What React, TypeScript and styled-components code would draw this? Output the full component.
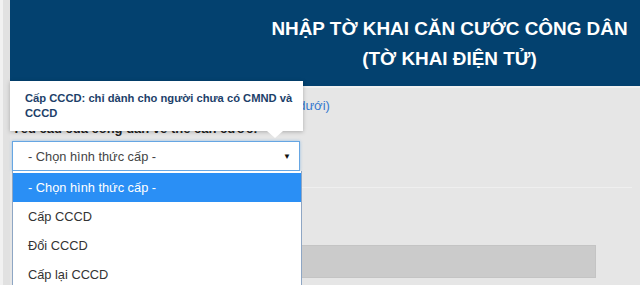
import styled, { createGlobalStyle } from "styled-components";

const GlobalStyle = createGlobalStyle`
  html, body {
    margin: 0;
    padding: 0;
    background: #e6e6e6;
    font-family: "Liberation Sans", Arial, sans-serif;
    overflow: hidden;
  }
`;

const OPTIONS = ["- Chọn hình thức cấp -", "Cấp CCCD", "Đổi CCCD", "Cấp lại CCCD"];

const App = () => {
  return (
    <>
      <GlobalStyle />
      <Page>
        <LeftRail />
        <Main>
          <Header>
            <HeaderTitle>
              NHẬP TỜ KHAI CĂN CƯỚC CÔNG DÂN
              <br />
              (TỜ KHAI ĐIỆN TỬ)
            </HeaderTitle>
          </Header>
          <Content>
            <Intro>
              Vui lòng khai đầy đủ thông tin <LinkText>(xem hướng dẫn ở dưới)</LinkText>
            </Intro>
            <FieldLabel>Yêu cầu của công dân về thẻ căn cước:</FieldLabel>
            <SelectWrap>
              <SelectBox>
                <span>{OPTIONS[0]}</span>
                <Caret>▼</Caret>
              </SelectBox>
              <DropList>
                {OPTIONS.map((opt, i) => (
                  <OptionRow key={opt} $active={i === 0}>
                    {opt}
                  </OptionRow>
                ))}
              </DropList>
              <Tooltip>
                Cấp CCCD: chỉ dành cho người chưa có CMND và CCCD
              </Tooltip>
            </SelectWrap>
            <Divider />
            <FieldLabel>Họ, chữ đệm và tên khai sinh:</FieldLabel>
            <DisabledInput />
          </Content>
        </Main>
      </Page>
    </>
  );
};

export default App;

const Page = styled.div`
  display: flex;
  width: 640px;
  height: 285px;
  overflow: hidden;
`;

const LeftRail = styled.div`
  width: 3px;
  flex-shrink: 0;
  background: #f1f1f1;
  border-right: 7px solid #e1e1e1;
`;

const Main = styled.div`
  flex: 1;
  display: flex;
  flex-direction: column;
`;

const Header = styled.div`
  height: 86px;
  background: #03416f;
  display: flex;
  align-items: center;
  padding-left: 249px;
  border-bottom: 2px solid #f0f0f0;
`;

const HeaderTitle = styled.h1`
  margin: 0;
  flex: 1;
  text-align: center;
  color: #ffffff;
  font-size: 18.9px;
  font-weight: bold;
  line-height: 30px;
  padding-top: 2px;
`;

const Content = styled.div`
  padding: 8px 0 0 2px;
  display: flex;
  flex-direction: column;
`;

const Intro = styled.div`
  height: 20px;
  font-size: 13px;
  line-height: 20px;
  color: #333;
`;

const LinkText = styled.span`
  color: #3579d0;
`;

const FieldLabel = styled.div`
  font-size: 13px;
  font-weight: bold;
  color: #222;
  line-height: 18px;
  margin-top: 4px;
  margin-bottom: 3px;
`;

const SelectWrap = styled.div`
  position: relative;
  width: 288px;
`;

const SelectBox = styled.div`
  height: 28px;
  box-sizing: content-box;
  border: 1px solid #66a6e3;
  background: #fff;
  display: flex;
  align-items: center;
  justify-content: space-between;
  padding: 0 8px 0 15px;
  font-size: 12.8px;
  color: #444;
  box-shadow: 0 0 3px rgba(102, 166, 227, 0.6);
`;

const Caret = styled.span`
  font-size: 8px;
  color: #111;
`;

const DropList = styled.div`
  position: absolute;
  top: 30px;
  left: 0;
  width: 288px;
  background: #fff;
  border: 1px solid #8ea6c4;
  border-top: none;
  z-index: 5;
  padding-top: 2px;
`;

const OptionRow = styled.div<{ $active: boolean }>`
  height: 29px;
  line-height: 29px;
  padding-left: 15px;
  font-size: 12.8px;
  color: ${(p) => (p.$active ? "#fff" : "#333")};
  background: ${(p) => (p.$active ? "#2a8ff5" : "#fff")};
`;

const Tooltip = styled.div`
  position: absolute;
  left: -2px;
  bottom: 40px;
  width: 274px;
  padding: 10px 4px 10px 15px;
  background: #fff;
  color: #1d3f6a;
  font-size: 11.2px;
  font-weight: bold;
  line-height: 15px;
  box-shadow: 0 1px 4px rgba(0, 0, 0, 0.25);
  z-index: 6;

  &::after {
    content: "";
    position: absolute;
    right: 20px;
    bottom: -7px;
    border-left: 8px solid transparent;
    border-right: 8px solid transparent;
    border-top: 7px solid #fff;
  }
`;

const Divider = styled.div`
  height: 1px;
  background: #efefef;
  margin: 16px 0 0 0;
  width: 620px;
`;

const DisabledInput = styled.div`
  width: 582px;
  height: 31px;
  margin-top: 32px;
  background: #cbcbcb;
  border: 1px solid #c4c4c4;
`;
